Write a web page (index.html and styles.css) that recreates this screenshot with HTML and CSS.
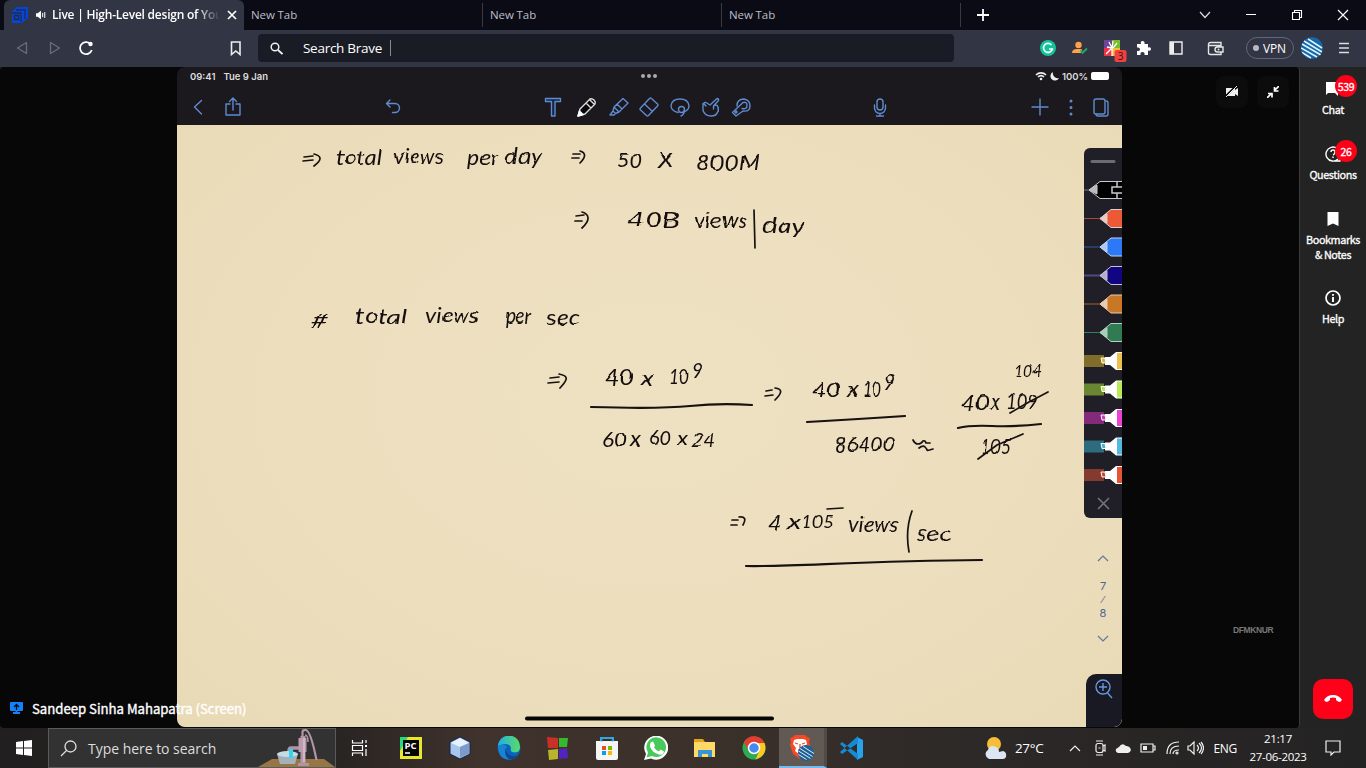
FILE: index.html
```html
<!DOCTYPE html>
<html lang="en">
<head>
<meta charset="utf-8">
<title>Live | High-Level design of YouTube</title>
<link rel="stylesheet" href="styles.css">
</head>
<body>
<header class="tabs">
  <div class="tab active">
    <svg class="fav" width="18" height="16" viewBox="0 0 18 16"><path d="M6 0h11v11l-6 5H1V5z" fill="#0546d9"/><path d="M5 3h9v9M1 6h9v9" fill="none" stroke="#202a55" stroke-width="1.300"/><path d="M3.500 8.500h4v4h-4z" fill="#0546d9" stroke="#23283d" stroke-width="1.500"/></svg>
    <svg class="sound" width="10" height="10" viewBox="0 0 12 12"><path d="M0 4h2l4-3v10L2 8H0z" fill="#fff"/><path d="M8 3.500v5M10.500 2.500v7" stroke="#fff" stroke-width="1.200"/></svg>
    <span class="title">Live | High-Level design of You</span>
    <svg class="close" width="10" height="10" viewBox="0 0 10 10"><path d="M1 1l8 8M9 1L1 9" stroke="#fff" stroke-width="1.700"/></svg>
  </div>
  <div class="tab">New Tab</div><div class="tab">New Tab</div><div class="tab">New Tab</div>
  <svg class="plus" width="12" height="12" viewBox="0 0 12 12"><path d="M6 0v12M0 6h12" stroke="#fff" stroke-width="1.800"/></svg>
  <div class="winbtns">
    <svg width="12" height="12" viewBox="0 0 12 12"><path d="M1 3l5 5.500L11 3" fill="none" stroke="#ddd" stroke-width="1.200"/></svg>
    <svg width="12" height="12" viewBox="0 0 12 12"><path d="M1 5.500h10" stroke="#fff"/></svg>
    <svg width="12" height="12" viewBox="0 0 12 12"><path d="M1.500 3.500h7v7h-7zM3.500 3V1.500h7v7H9" fill="none" stroke="#fff" stroke-width="1.100"/></svg>
    <svg width="12" height="12" viewBox="0 0 12 12"><path d="M1 1l10 10M11 1L1 11" stroke="#fff" stroke-width="1.200"/></svg>
  </div>
</header>
<nav class="bar">
  <svg class="nav-i" width="12" height="14" viewBox="0 0 12 14"><path d="M10.500 1.500v11L1.500 7z" fill="none" stroke="#686d80" stroke-width="1.300" stroke-linejoin="round"/></svg>
  <svg class="nav-i fwd" width="12" height="14" viewBox="0 0 12 14"><path d="M1.500 1.500v11l9-5.500z" fill="none" stroke="#686d80" stroke-width="1.300" stroke-linejoin="round"/></svg>
  <svg class="nav-i rel" width="14" height="14" viewBox="0 0 14 14"><path d="M11 2.500A6 6 0 1 0 12.800 9" fill="none" stroke="#fff" stroke-width="1.700"/><circle cx="11.500" cy="3" r="2.200" fill="#fff"/></svg>
  <svg class="mark" width="12" height="15" viewBox="0 0 12 15"><path d="M1.500 1h8.500v12.500L5.800 10 1.500 13.500z" fill="none" stroke="#eee" stroke-width="1.600"/></svg>
  <div class="address">
    <svg width="13" height="13" viewBox="0 0 13 13"><circle cx="5" cy="5" r="3.800" fill="none" stroke="#eee" stroke-width="1.500"/><path d="M8 8l4.500 4" stroke="#eee" stroke-width="1.800"/></svg>
    <span>Search Brave</span><i></i>
  </div>
  <div class="ext">
    <svg width="16" height="16" viewBox="0 0 16 16"><circle cx="8" cy="8" r="8" fill="#13c39a"/><path d="M11.500 5A4.500 4.500 0 1 0 12.400 9H9" fill="none" stroke="#fff" stroke-width="1.600"/></svg>
    <svg width="16" height="16" viewBox="0 0 16 16"><circle cx="6.500" cy="5" r="3.200" fill="#ffa149"/><path d="M0 13q0-4 5-4h3q2 0 2.500 1L9 12v1z" fill="#ffa149"/><path d="M8.500 10.500l2 2.500L15 8.500" fill="none" stroke="#24a866" stroke-width="1.800"/></svg>
    <svg class="wide" width="23" height="23" viewBox="0 0 23 23"><path fill="#6d4596" d="M0 1h8v8H0z"/><path fill="#78bd2e" d="M8 1h8v8H8z"/><path fill="#ed3146" d="M0 9h8v8H0z"/><path fill="#f7bd36" d="M8 9h8v8H8z"/><path d="M8 9v8M7 10L2 15M8 9L3 8M8 9L5 3M8 9l1-7M9 9l4-5" stroke="#fff" stroke-width="1.300"/><rect x="10.500" y="11" width="12" height="12" rx="2" fill="#f04141"/><text x="16.500" y="20.800" font-size="10" text-anchor="middle" fill="#351010">3</text></svg>
    <svg width="16" height="16" viewBox="0 0 16 16"><path d="M1 4h4Q4 1 6.500 1T8.500 4H12v3.500q3-1 3 1.500t-3 1.500V15H8.500q.5-3-2-3t-2 3H1v-4q3 .5 3-1.800T1 7.500z" fill="#fff"/></svg>
    <svg width="16" height="16" viewBox="0 0 16 16"><path d="M2 2h12v12H2z" fill="none" stroke="#eee" stroke-width="1.400"/><path d="M2 2h4v12H2z" fill="#eee"/></svg>
    <svg class="wallet" width="17" height="15" viewBox="0 0 17 15"><path d="M14 4V1.500H3.500A2 2 0 0 0 1.500 3v8.500q0 2 2 2H14V11M1.500 4.500H14V6M16 6v5h-5.500a2.500 2.500 0 0 1 0-5z" fill="none" stroke="#e5e5e5" stroke-width="1.400"/><circle cx="11.500" cy="8.500" r="1" fill="#e5e5e5"/></svg>
    <div class="vpn"><i></i>VPN</div>
    <svg class="globe" width="22" height="22" viewBox="0 0 22 22"><circle cx="11" cy="11" r="11" fill="#1767a9"/><path d="M3 4l18 11M1 7l19 11M0 11l16 9M7 2l14 9M0 15l10 6" stroke="#dcf5ff" stroke-width="1.500"/></svg>
    <svg class="burger" width="11" height="14" viewBox="0 0 11 14"><path d="M0 2.500h10M0 7h10M0 11.500h10" stroke="#ddd" stroke-width="1.500"/></svg>
  </div>
</nav>
<main class="meeting">
  <section class="stage">
    <div class="tablet">
      <div class="status"><span>09:41</span><span class="date">Tue 9 Jan</span><span class="dots"><i></i><i></i><i></i></span>
        <span class="power"><svg width="12" height="10" viewBox="0 0 12 10"><path d="M1 4a7 7 0 0 1 10 0M3 6a4 4 0 0 1 6 0" fill="none" stroke="#eee" stroke-width="1.600"/><circle cx="6" cy="8" r="1.300" fill="#eee"/></svg><svg width="9" height="9" viewBox="0 0 9 9"><path d="M3 0a5 5 0 0 0 6 6A4.500 4.500 0 1 1 3 0" fill="#eee"/></svg><b>100%</b><em></em></span></div>
      <div class="tools">
        <svg class="t1" viewBox="0 0 20 20"><path d="M13.500 3.500L6.500 10l7 7"/></svg>
        <svg class="t2" viewBox="0 0 20 20"><path d="M7 7H3v11h14V7h-4M10 13V1M6.500 4.500L10 1l3.500 3.500"/></svg>
        <svg class="t3" viewBox="0 0 20 20"><path d="M7 3L3.500 6.500 7 10M4 6.500h8a4 4 0 0 1 0 9H9.500"/></svg>
        <svg class="t4" viewBox="0 0 20 20"><path fill="#152543" d="M2.500 1.500h15v3H12v14.500H8.500v-14.500h-6z"/></svg>
        <svg class="t5" viewBox="0 0 20 20"><path stroke="#ddd" fill="#08080a" d="M1 19l2-7L13 2q2-1 4 1t1 4L8 17zM9 6l5 5M13 3l4 4"/><path d="M1 19l1.500-5 3.500 3.500z" fill="#fff" stroke="#fff"/></svg>
        <svg class="t6" viewBox="0 0 20 20"><path d="M5 10l9-8.500L19 6l-9 9zM8 7l5 5M5 10l-1 4 2.500 2.500L10 15M4 14l-3 4h4l1.500-1.500"/></svg>
        <svg class="t7" viewBox="0 0 20 20"><path d="M1.500 11L10.500 1.500q1-1 2 0l6 5.500q1 1 0 2L9.500 18.500q-1 1-2 0l-6-5.500q-1-1 0-2zM5.500 7l8 7.500"/></svg>
        <svg class="t8" viewBox="0 0 20 20"><path d="M8 15.500Q1 14 1 8.500 2 2 10 2t9 6.500q0 5-5.500 6.500"/><circle cx="11.500" cy="12.500" r="3"/><path d="M14.500 12.500q0 5-3.500 6.500"/></svg>
        <svg class="t9" viewBox="0 0 20 20"><path d="M5 9L3 7q0-2 2-1.500L9 8l7-6.500q2 0 1.500 2L12.500 9q4-2 4 .5 1.500 1 .5 2.500 1 2-.5 3-1 4-6.500 4-6 0-8-5.500V6.500M12.500 9v3"/></svg>
        <svg class="t10" viewBox="0 0 20 20"><path d="M6 9q0-7 7-7 6 1 6 7t-7 5l-7 5-3.500-3.500L12 5.500q4-1 4 3t-5 3"/><circle cx="5" cy="15" r="1"/></svg>
        <svg class="t11" viewBox="0 0 20 20"><rect x="7" y="2" width="6" height="11" rx="3"/><path d="M4.500 8v3a5.500 5.500 0 0 0 11 0V8M10 16.500V19M6.500 19h7"/></svg>
        <svg class="t12" viewBox="0 0 20 20"><path d="M10 2v16M2 10h16"/></svg>
        <svg class="t13" viewBox="0 0 20 20"><path d="M10 4v.01M10 10.500v.01M10 17v.01" stroke-width="3"/></svg>
        <svg class="t14" viewBox="0 0 20 20"><rect x="3" y="2" width="11" height="15" rx="2"/><path d="M15 4q2 0 2 2v11q0 2-2 2H7q-2 0-2-2"/></svg>
      </div>
      <div class="paper">
        <svg class="ink" width="944" height="602" viewBox="178 125 944 602">
          <defs><filter id="wobble" x="-2%" y="-2%" width="104%" height="104%"><feTurbulence type="fractalNoise" baseFrequency=".05" numOctaves="1" seed="4"/><feDisplacementMap in="SourceGraphic" scale="4.500" xChannelSelector="R" yChannelSelector="G"/></filter></defs>
          <g class="writing">
            <text x="336" y="165" textLength="46" lengthAdjust="spacingAndGlyphs">total</text><text x="394" y="164" textLength="50" lengthAdjust="spacingAndGlyphs">views</text><text x="467" y="165" textLength="31" lengthAdjust="spacingAndGlyphs">per</text><text x="505" y="164" textLength="37" lengthAdjust="spacingAndGlyphs">day</text>
            <text x="617" y="168" textLength="25" lengthAdjust="spacingAndGlyphs">50</text><text x="658" y="168" textLength="15" lengthAdjust="spacingAndGlyphs">X</text><text x="696" y="170" textLength="64" lengthAdjust="spacingAndGlyphs">800M</text>
            <text x="627" y="227" textLength="53" lengthAdjust="spacingAndGlyphs">40B</text><text x="694" y="228" textLength="54" lengthAdjust="spacingAndGlyphs">views</text><text x="762" y="233" textLength="43" lengthAdjust="spacingAndGlyphs">day</text>
            <text x="311" y="328" textLength="17" lengthAdjust="spacingAndGlyphs">#</text><text x="355" y="324" textLength="52" lengthAdjust="spacingAndGlyphs">total</text><text x="425" y="323" textLength="54" lengthAdjust="spacingAndGlyphs">views</text><text x="505" y="323" textLength="26" lengthAdjust="spacingAndGlyphs">per</text><text x="547" y="325" textLength="33" lengthAdjust="spacingAndGlyphs">sec</text>
            <text x="605" y="385" textLength="29" lengthAdjust="spacingAndGlyphs">40</text><text x="641" y="385" textLength="12" lengthAdjust="spacingAndGlyphs">x</text><text x="669" y="384" textLength="20" lengthAdjust="spacingAndGlyphs">10</text><text x="692" y="378" textLength="11" lengthAdjust="spacingAndGlyphs">9</text>
            <text x="602" y="447" textLength="25" lengthAdjust="spacingAndGlyphs">60</text><text x="630" y="446" textLength="11" lengthAdjust="spacingAndGlyphs">x</text><text x="649" y="445" textLength="22" lengthAdjust="spacingAndGlyphs">60</text><text x="677" y="446" textLength="11" lengthAdjust="spacingAndGlyphs">x</text><text x="692" y="447" textLength="23" lengthAdjust="spacingAndGlyphs">24</text>
            <text x="812" y="397" textLength="29" lengthAdjust="spacingAndGlyphs">40</text><text x="847" y="397" textLength="11" lengthAdjust="spacingAndGlyphs">x</text><text x="862" y="397" textLength="19" lengthAdjust="spacingAndGlyphs">10</text><text x="884" y="389" textLength="11" lengthAdjust="spacingAndGlyphs">9</text><text x="834" y="452" textLength="61" lengthAdjust="spacingAndGlyphs">86400</text>
            <text class="small" x="1015" y="377" textLength="27" lengthAdjust="spacingAndGlyphs">104</text><text x="962" y="410" textLength="27" lengthAdjust="spacingAndGlyphs">40</text><text x="990" y="409" textLength="10" lengthAdjust="spacingAndGlyphs">x</text><text x="1006" y="409" textLength="32" lengthAdjust="spacingAndGlyphs">109</text><text x="981" y="454" textLength="30" lengthAdjust="spacingAndGlyphs">105</text>
            <text x="768" y="530" textLength="14" lengthAdjust="spacingAndGlyphs">4</text><text x="788" y="530" textLength="13" lengthAdjust="spacingAndGlyphs">x</text><text class="small" x="802" y="528" textLength="32" lengthAdjust="spacingAndGlyphs">105</text><text x="848" y="532" textLength="51" lengthAdjust="spacingAndGlyphs">views</text><text x="917" y="541" textLength="34" lengthAdjust="spacingAndGlyphs">sec</text>
          </g>
          <g class="strokes">
            <path d="M304 157l9-1M303 161l10-1M314 154c8 2 8 6 0 12M573 154h7M572 158h7M580 151c7 2 5 7 0 12M576 216l8-1M575 221h7M582 212c7 2 9 8 0 16M550 378l9-1M548 383l11-1M559 374c10 2 9 5 1 14M766 391l6-1M765 396l8-1M775 388c8 1 7 5 0 12M732 520h6M731 525h6M739 517q9-1 4 8"/>
            <path d="M754 210l1 38M912 511q-7 19-3 41M827 509l16-1M913 440q2 4 5 4t5-3q2-1 3 2h4M919 448q4-3 6-1t2 3 6-1M1010 413l19-11 19-10M978 459l19-14 26-11"/>
            <path class="rule" d="M591 407Q660 409 690 406T752 405M807 422Q860 419 905 416M958 428Q970 425 992 426T1041 424M746 566C790 567 860 561 982 560"/>
          </g>
          <rect class="home" x="525" y="716.500" width="249" height="4" rx="2"/>
        </svg>
        <aside class="pens">
          <svg width="38" height="370" viewBox="1084 148 38 370">
            <path d="M1092 161.500h22" stroke="#6c6a72" stroke-width="3" stroke-linecap="round"/>
            <g stroke="#c8c8ce"><path d="M1084 190h6" stroke="#777"/><path d="M1089 190l11-8.500h24v17h-24z" fill="#000"/><path d="M1089 190l8-5v9z" fill="#bbb"/><path d="M1117 182v5h-5v6h5v5M1117 187h6M1117 193h6" fill="none" stroke-width="1.500"/></g>
            <defs><path id="body" d="M1100 218.500l11-9h13v18h-13z"/><path id="tip" d="M1100 218.500l7-5v10z"/><path id="marker" d="M1105 357h5l6-5h8v18h-8l-6-5h-5z"/></defs>
            <g stroke="#d5d0d9"><path d="M1084 218.500h16" stroke="#a54a35"/><use href="#body" fill="#ed5835"/><use href="#tip" fill="#f5c6ba"/></g>
            <g stroke="#c5d2f0" transform="translate(0 28.500)"><path d="M1084 218.500h16" stroke="#29609f"/><use href="#body" fill="#2b79f6"/><use href="#tip" fill="#a8c9fa"/></g>
            <g stroke="#c4bfda" transform="translate(0 57)"><path d="M1084 218.500h16" stroke="#514982" stroke-width="2"/><use href="#body" fill="#110581"/><use href="#tip" fill="#b6abd1"/></g>
            <g stroke="#e6cab4" transform="translate(0 85.500)"><path d="M1084 218.500h16" stroke="#a2672d"/><use href="#body" fill="#c87727"/><use href="#tip" fill="#ebcbb2"/></g>
            <g stroke="#b5cfc1" transform="translate(0 114)"><path d="M1084 218.500h16" stroke="#318066"/><use href="#body" fill="#317b52"/><use href="#tip" fill="#a6ccba"/></g>
            <g><path d="M1084 355h20v12h-20z" fill="#806d2b"/><use href="#marker" fill="#fff"/><path d="M1101 358h4l1 5h-4z" fill="#e7b832" stroke="#fff"/><path d="M1117 353h5v16h-5z" fill="#eac14d"/></g>
            <g transform="translate(0 28.500)"><path d="M1084 355h20v12h-20z" fill="#698632"/><use href="#marker" fill="#fff"/><path d="M1101 358h4l1 5h-4z" fill="#bce649" stroke="#fff"/><path d="M1117 353h5v16h-5z" fill="#b9e955"/></g>
            <g transform="translate(0 57)"><path d="M1084 355h20v12h-20z" fill="#832a7b"/><use href="#marker" fill="#fff"/><path d="M1101 358h4l1 5h-4z" fill="#cf38b9" stroke="#fff"/><path d="M1117 353h5v16h-5z" fill="#ec42d4"/></g>
            <g transform="translate(0 85.500)"><path d="M1084 355h20v12h-20z" fill="#2d6b7f"/><use href="#marker" fill="#fff"/><path d="M1101 358h4l1 5h-4z" fill="#4fafd0" stroke="#fff"/><path d="M1117 353h5v16h-5z" fill="#52b9df"/></g>
            <g transform="translate(0 114)"><path d="M1084 355h20v12h-20z" fill="#833b30"/><use href="#marker" fill="#fff"/><path d="M1101 358h4l1 5h-4z" fill="#d64030" stroke="#fff"/><path d="M1117 353h5v16h-5z" fill="#e75335"/></g>
            <path d="M1098 498l11 11M1109 498l-11 11" stroke="#77767d" stroke-width="1.500"/>
          </svg>
        </aside>
        <div class="pages"><svg width="12" height="8" viewBox="0 0 12 8"><path d="M1 6l5-5 5 5"/></svg><span>7</span><small>⁄</small><span>8</span><svg width="12" height="8" viewBox="0 0 12 8"><path d="M1 1l5 5 5-5"/></svg></div>
        <div class="zoombox"><svg width="18" height="20" viewBox="0 0 18 20"><path d="M12.500 14L17 19M8 4v8M4 8h8" /><circle cx="8" cy="8" r="7"/></svg></div>
      </div>
    </div>
    <div class="overlaybtns">
      <span><svg width="14" height="12" viewBox="0 0 14 12"><path d="M1 2h9v2l3-2v8l-3-2v2H1z" fill="#eee"/><path d="M0 11L11 0" stroke="#080808" stroke-width="2"/><path d="M1 11L12 0" stroke="#eee"/></svg></span>
      <span><svg width="12" height="12" viewBox="0 0 12 12"><path d="M12 0L8 4M7.500 1v4h4M0 12l4-4M1 7.500h4v4" fill="none" stroke="#fff" stroke-width="1.700"/></svg></span>
    </div>
    <div class="watermark">DFMKNUR</div>
    <div class="speaker"><svg width="13" height="12" viewBox="0 0 13 12"><rect width="13" height="9" rx="1" fill="#1482fa"/><path d="M3 11h7M6.500 9v2" stroke="#1482fa" stroke-width="2"/><path d="M6.500 8V2.500M4 5l2.500-2.500L9 5" fill="none" stroke="#0a1018" stroke-width="1.300"/></svg><span>Sandeep Sinha Mahapatra (Screen)</span></div>
  </section>
  <aside class="side">
    <div class="item chat"><svg width="16" height="16" viewBox="0 0 16 16"><path d="M1 1h13v11h-1v3l-3-3H3l-2 2z" fill="#fff"/></svg><span>Chat</span><b>539</b></div>
    <div class="item ques"><svg width="16" height="16" viewBox="0 0 16 16"><path d="M13 13a7 7 0 1 1 2-5v7h-4" fill="none" stroke="#fff" stroke-width="1.400"/><path d="M6 6q0-2 2-2t2 2-2 3M8 10.500V12" fill="none" stroke="#fff" stroke-width="1.400"/></svg><span>Questions</span><b>26</b></div>
    <div class="item book"><svg width="16" height="16" viewBox="0 0 16 16"><path d="M2.500 1h11v14L8 12.500 2.500 15z" fill="#fff"/></svg><span>Bookmarks<br>&amp; Notes</span></div>
    <div class="item help"><svg width="16" height="16" viewBox="0 0 16 16"><circle cx="8" cy="8" r="7" fill="none" stroke="#fff" stroke-width="1.700"/><path d="M8 7v5M8 4v1.700" stroke="#fff" stroke-width="1.900"/></svg><span>Help</span></div>
    <div class="hang"><svg width="18" height="8" viewBox="0 0 18 8"><path d="M0 5Q3 0 9 0t9 5l-2 2q-2 0-4-2V3Q9 2 6 3v2Q4 7 2 7z" fill="#fff"/></svg></div>
  </aside>
</main>
<footer class="taskbar">
  <div class="start"><svg width="16" height="16" viewBox="0 0 16 16"><path d="M0 2l7-1v6.500H0zM8 1l8-1v7.500H8zM0 8.500h7V15l-7-1zM8 8.500h8V16l-8-1z" fill="#fff"/></svg></div>
  <div class="search"><svg width="17" height="17" viewBox="0 0 17 17"><circle cx="10.500" cy="6.500" r="5.500"/><path d="M6.500 10.500L1 16"/></svg><span>Type here to search</span>
    <svg class="pump" width="77" height="38" viewBox="0 0 77 38"><path d="M0 38l14-8h52l11 8z" fill="#977544"/><path d="M19 25h21l-3 10H22z" fill="#a4b1b8"/><ellipse cx="29.500" cy="25" rx="10.500" ry="3" fill="#c4dce2"/><path d="M43 19H33q-2 0-2 3" fill="none" stroke="#b093a4" stroke-width="3.500"/><path d="M33 20v9" stroke="#35d4f0" stroke-width="4"/><path d="M45 7v28" stroke="#b497a8" stroke-width="5"/><path d="M40.500 9h8v14h-8z" fill="#b99dad"/><path d="M46 9v24" stroke="#d9c0ce" stroke-width="1.500"/><path d="M44.500 8V3q0-2 3-2 5 0 11 30" fill="none" stroke="#b395a8" stroke-width="2.200"/><path d="M47 6q3 0 3 7" fill="none" stroke="#b395a8" stroke-width="1.500"/><path d="M40 35.500h11" stroke="#b092a3" stroke-width="3"/></svg>
  </div>
  <div class="apps">
    <svg class="taskview" width="24" height="24" viewBox="0 0 24 24"><path d="M4.500 4v3h10V4M4.500 20v-3h10v3M4.500 9.500h10v5h-10zM18 4v3M18 13v7" fill="none" stroke="#fff" stroke-width="1.200"/><path d="M17 9h2v2h-2z" fill="#fff"/></svg>
    <svg width="24" height="24" viewBox="0 0 24 24"><path d="M1 1h22v22H1z" fill="#e6e829"/><path d="M1 1h8L1 15z" fill="#25db7e"/><path d="M4 4h16v16H4z" fill="#050505"/><text x="5.500" y="12.500" font-size="8.500" font-weight="bold" fill="#fff" textLength="12" lengthAdjust="spacingAndGlyphs">PC</text><path d="M6 17h5" stroke="#fff" stroke-width="1.500"/></svg>
    <svg width="24" height="24" viewBox="0 0 24 24"><path d="M12 1l10 5v12l-10 5-10-5V6z" fill="#a9c7ed" stroke="#132350"/><path d="M3 7l9 4 9-4-9-5z" fill="#e5f2ff"/><path d="M12 11l9-4v10.500L12 22z" fill="#7d9ac8"/></svg>
    <svg width="24" height="24" viewBox="0 0 24 24"><defs><linearGradient id="eg"><stop stop-color="#22aee5"/><stop offset="1" stop-color="#5bdc66"/></linearGradient></defs><circle cx="12" cy="12" r="11.500" fill="#0b62b7"/><path d="M1 10A11 11 0 0 1 23 11q0 7-8 5-2-1-1-4Q12 5 1 10" fill="url(#eg)"/><path d="M1 10q7-3 9 1-5 4 1 9 4 3 10 0-7 6-15 2-5-4-5-12" fill="#1684d2"/><path d="M10 11q-3 6 5 9 4 1 6-1-2 5-9 4-6-4-2-12" fill="#0c4694"/></svg>
    <svg width="24" height="24" viewBox="0 0 24 24"><path d="M1 1l11 1v10H2z" fill="#c93028"/><path d="M13 2h9l-1 9h-8z" fill="#36b82c"/><path d="M2 14l10-1v10l-9 1z" fill="#b9b42c"/><path d="M13 13l8-1 1 10-9 1z" fill="#5423bf"/></svg>
    <svg width="24" height="24" viewBox="0 0 24 24"><path d="M6 7V2h12v5" fill="none" stroke="#2ea8e5" stroke-width="2"/><path d="M1 5h22v17q0 2-2 2H3q-2 0-2-2z" fill="#f5f5f5"/><path d="M6.500 5.500V2h11v3.500" fill="none" stroke="#2ea8e5" stroke-width="1.500"/><path d="M7 10h4v4H7z" fill="#e94b25"/><path d="M13 10h4v4h-4z" fill="#7eb900"/><path d="M7 15h4v4H7z" fill="#089fe5"/><path d="M13 15h4v4h-4z" fill="#fab800"/></svg>
    <svg width="24" height="24" viewBox="0 0 24 24"><path d="M0 24l2-6A12 12 0 1 1 7 22.500z" fill="#fff"/><path d="M2.500 21.500l1.500-5A9.800 9.800 0 1 1 8 20z" fill="#48c95c"/><path d="M7 6l2-.5 2 4-1 2q2 3 5 4l1.500-2 3.500 2q-1 4-5 3-7-2-9-8-.5-2 1-4.500" fill="#fff"/></svg>
    <svg width="24" height="24" viewBox="0 0 24 24"><path d="M1 3h9l2 3H1z" fill="#e4a51a"/><path d="M1 6h21v15H1z" fill="#ffd968"/><path d="M5 21v-7h14v7h-4v-3H9v3z" fill="#3895d3"/></svg>
    <svg width="24" height="24" viewBox="0 0 24 24"><circle cx="12" cy="12" r="11.500" fill="#2cab50"/><path d="M2 6A11.500 11.500 0 0 1 22.500 7H12l-5 8z" fill="#e53c31"/><path d="M12 7h10.500q4 12-9 16.500l4-9z" fill="#fdc91f"/><circle cx="12" cy="12" r="5.500" fill="#4789ef" stroke="#fff" stroke-width="1.500"/></svg>
    <div class="brave"><svg width="26" height="27" viewBox="0 0 26 27"><path d="M6 1h10l2 2 3 1-1 4 1 3-3 9-7 5-7-5-3-9 1-3-1-4 3-1z" fill="#f84925"/><path d="M5 6l3-1h6l3 1 1 4-3 4 1 3-5 4-5-4 1-3-3-4z" fill="#fff"/><path d="M6 9l3 1M16 9l-3 1M11 10v4M9 16h4" stroke="#f84925" stroke-width="1.300" fill="none"/><circle cx="17" cy="19" r="8" fill="#206095"/><path d="M11 14.500l12.500 8M9.500 17l12 7.500M14 12.500l11 7M9.500 20.500l8 5" stroke="#d9ecf2"/></svg></div>
    <svg class="code" width="24" height="24" viewBox="0 0 24 24"><path d="M17 1l6 3v17l-6 3z" fill="#25a4ed"/><path d="M0 8l2-2 16 12v6zM0 16l2 2L18 7V0z" fill="#168bd5"/></svg>
  </div>
  <div class="tray">
    <svg class="weather" width="25" height="24" viewBox="0 0 25 24"><circle cx="12" cy="8" r="7" fill="#f7bd36"/><path d="M7 23a5 5 0 0 1-1-9q2-6 8-3 3 1 3 5l4-1q4 1 3 6-1 2-3 2z" fill="#dce6f2"/></svg><span class="temp">27°C</span>
    <svg class="up" width="12" height="8" viewBox="0 0 12 8"><path d="M1 7l5-5 5 5"/></svg>
    <svg class="cam" width="14" height="16" viewBox="0 0 14 16"><rect x="3" y="3.500" width="7" height="9" rx="2"/><path d="M10 6l2-1v6l-2-1M3 1h7M3 15h7M5.500 8h2"/></svg>
    <svg class="cloud" width="16" height="10" viewBox="0 0 16 10"><path d="M3 10q-3-1-2-4l3-2q3-5 7-1 4 0 5 4-1 3-3 3z"/></svg>
    <svg class="bat" width="16" height="12" viewBox="0 0 16 12"><path d="M1 2h12v8H1zM13 4h2v4h-2"/><path d="M3 4h4v4H3z" fill="#eee" stroke="none"/></svg>
    <svg class="net" width="14" height="14" viewBox="0 0 14 14"><path d="M1 13Q1 1 13 1M4 13q0-8 9-8M7 13q0-4 6-4"/><circle cx="11" cy="12" r="1"/></svg>
    <svg class="vol" width="17" height="14" viewBox="0 0 17 14"><path d="M1 5h2l4-4v12L3 9H1zM10 4q3 3 0 6M12 2q5 5 0 10M14 1q5 6 0 12"/></svg>
    <span class="lang">ENG</span><div class="clock">21:17<br>27-06-2023</div>
    <svg class="note" width="16" height="16" viewBox="0 0 16 16"><path d="M1 1h14v11H9l-3 3v-3H1z"/></svg>
  </div>
</footer>
</body>
</html>
```
FILE: styles.css
```css
* { box-sizing: border-box; }
body { margin: 0; width: 1366px; height: 768px; overflow: hidden; display: flex; flex-direction: column; background: #000; font-family: "Open Sans", sans-serif; color: #fff; }
svg { flex: none; display: block; }
.tabs { height: 30px; flex: none; background: #0a0b14; display: flex; align-items: center; padding-left: 4px; }
.tab { width: 239px; height: 24px; flex: none; font-size: 11.500px; line-height: 24px; color: #bdbec8; padding-left: 7px; letter-spacing: -.1px; border-right: 1px solid #383a45; }
.tab.active { width: 240px; height: 30px; background: #323544; border: 0; border-radius: 6px 6px 0 0; display: flex; align-items: center; font-weight: 600; color: #fff; }
.sound { margin-left: 7px; }
.title { width: 168px; margin-left: 6px; overflow: hidden; white-space: nowrap; font-size: 12px; letter-spacing: -.23px; -webkit-mask-image: linear-gradient(90deg, #000 86%, transparent); mask-image: linear-gradient(90deg, #000 86%, transparent); }
.close { margin-left: 7px; }
.plus { margin-left: 16px; }
.winbtns { margin-left: auto; margin-right: 17px; display: flex; gap: 34px; }
.bar { height: 37px; flex: none; background: #323544; display: flex; align-items: center; padding: 0 0 1px 16px; }
.fwd { margin-left: 21px; }
.rel { margin-left: 18px; }
.mark { margin-left: 137px; }
.address { width: 696px; height: 28px; margin-left: 16px; border-radius: 4px; background: #191c25; display: flex; align-items: center; padding-left: 12px; font-size: 13.500px; }
.address span { margin-left: 20px; letter-spacing: -.28px; }
.address i { width: 1px; height: 16px; background: #888; margin-left: 8px; }
.ext { display: flex; align-items: center; margin-left: 86px; gap: 16px; }
.wide { margin: 5px -7px 0 0; }
.wallet { margin-left: 7px; }
.vpn { width: 48px; height: 22px; margin-left: 6px; border: 1px solid #62667a; border-radius: 11px; font-size: 12px; letter-spacing: -.2px; display: flex; align-items: center; gap: 4px; padding-left: 6px; }
.vpn i { width: 6px; height: 6px; border-radius: 50%; background: #b7b9c9; }
.globe { margin-left: -9px; border-radius: 50%; }
.meeting { height: 661px; flex: none; display: flex; background: #232323; }
.stage { width: 1300px; background: #070707; position: relative; padding-left: 177px; border-right: 1px solid #3a3a3a; border-radius: 4px; }
.tablet { width: 945px; height: 660px; background: #1b181e; border-radius: 8px; overflow: hidden; }
.status { height: 20px; display: flex; align-items: center; padding: 0 13px 2px; font-family: Inter, sans-serif; font-size: 9.500px; font-weight: 600; color: #ddd; }
.date { margin-left: 8px; }
.dots { display: flex; gap: 2px; margin-left: 373px; }
.dots i { width: 4px; height: 4px; border-radius: 50%; background: #aaa; }
.power { margin-left: auto; display: flex; align-items: center; gap: 3px; }
.power b { font-size: 9.500px; font-weight: 600; }
.power em { width: 18px; height: 8px; border-radius: 2px; background: #fff; }
.tools { height: 38px; display: flex; align-items: center; padding: 2px 0 0 11px; }
.tools svg { width: 20px; height: 20px; fill: none; stroke: #5f8bcf; stroke-width: 1.400; stroke-linejoin: round; stroke-linecap: round; }
.tools .t2 { margin-left: 15px; } .tools .t3, .tools .t4, .tools .t12 { margin-left: 140px; }
.tools .t5 { margin-left: 14px; } .tools .t6 { margin-left: 12px; } .tools .t7, .tools .t10, .tools .t14 { margin-left: 10px; }
.tools .t8, .tools .t9, .tools .t13 { margin-left: 11px; } .tools .t11 { margin-left: 119px; }
.paper { height: 602px; position: relative; background: radial-gradient(ellipse at 50% 45%, #eee1c2, #ecdebd 60%, #e9dab6); }
.ink { margin-left: 1px; }
.writing { font: italic 21px Lato, sans-serif; fill: #17110f; filter: url(#wobble); }
.writing .small { font-size: 18px; }
.strokes { fill: none; stroke: #17110f; stroke-width: 1.700; stroke-linecap: round; stroke-linejoin: round; }
.rule { stroke-width: 2.200; }
.home { fill: #050505; }
.pens { position: absolute; left: 907px; top: 23px; width: 38px; height: 370px; background: #201e27; border-radius: 6px 0 0 6px; overflow: hidden; }
.pages { position: absolute; right: 10px; top: 430px; width: 18px; display: flex; flex-direction: column; align-items: center; font: 11px/14px Inter, sans-serif; color: #4d6792; }
.pages svg { fill: none; stroke: #637798; stroke-width: 1.200; }
.pages span:first-of-type { margin-top: 16px; }
.pages small { height: 13px; }
.pages svg:last-child { margin-top: 15px; }
.zoombox { position: absolute; right: 0; bottom: 0; width: 36px; height: 53px; background: #181923; border-radius: 10px 0 8px 0; padding: 5px 9px; }
.zoombox svg { fill: none; stroke: #6796df; stroke-width: 1.400; }
.overlaybtns { position: absolute; left: 1216px; top: 9px; display: flex; gap: 9px; }
.overlaybtns span { width: 32px; height: 32px; border-radius: 8px; background: #0c0c0c; display: flex; align-items: center; justify-content: center; }
.watermark { position: absolute; left: 1233px; top: 557px; font: bold 8.500px/12px "Liberation Sans", sans-serif; letter-spacing: -.4px; color: #777; }
.speaker { position: absolute; left: 10px; top: 631px; height: 20px; display: flex; align-items: center; font: 400 13.200px "Noto Sans CJK SC", sans-serif; -webkit-text-stroke: .35px #fff; }
.speaker span { margin-left: 9px; white-space: nowrap; letter-spacing: -.02px; }
.side { width: 66px; display: flex; flex-direction: column; align-items: center; position: relative; }
.item { position: relative; display: flex; flex-direction: column; align-items: center; font: 400 10.800px/15px "Noto Sans CJK SC", sans-serif; letter-spacing: -.38px; text-align: center; -webkit-text-stroke: .3px #fff; }
.item span { margin-top: 5px; white-space: nowrap; }
.item b { position: absolute; left: 50%; top: -6px; margin-left: 2px; width: 22px; height: 22px; border-radius: 50%; background: #ff0019; display: flex; align-items: center; justify-content: center; font-size: 10.500px; font-weight: 400; }
.chat { margin-top: 14px; } .ques { margin-top: 29px; } .book { margin-top: 29px; } .help { margin-top: 28px; }
.hang { width: 40px; height: 40px; border-radius: 10px; background: #ff0019; display: flex; align-items: center; justify-content: center; position: absolute; top: 612px; left: 13px; }
.taskbar { height: 40px; flex: none; display: flex; background: linear-gradient(90deg, #211f1f, #292523 25%, #40322c 35%, #3a302a 55%, #302b29 65%, #292625 80%, #242324); }
.start { width: 48px; display: flex; align-items: center; justify-content: center; }
.search { width: 288px; border: 1px solid #5c5b5b; background: #323232; display: flex; align-items: center; padding-left: 11px; color: #ddd; font-size: 14px; letter-spacing: -.03px; }
.search > svg:first-child { fill: none; stroke: #ddd; stroke-width: 1.300; }
.search span { margin-left: 11px; white-space: nowrap; }
.pump { margin-left: auto; }
.apps { display: flex; align-items: center; margin-left: 12px; }
.apps > svg { margin-right: 25px; }
.apps > .taskview { margin-right: 27px; }
.brave { width: 48px; height: 40px; margin-left: -12px; display: flex; align-items: center; justify-content: center; background: #605954; border-bottom: 2px solid #76b9ed; border-right: 3px solid #514b47; }
.apps > .code { margin: 0 0 0 13px; }
.tray { flex: 1; display: flex; align-items: center; justify-content: flex-end; padding-right: 25px; font-size: 12px; }
.tray svg { fill: none; stroke: #eee; stroke-width: 1.200; }
.tray .weather { stroke: none; }
.tray .cloud { fill: #eee; stroke: none; }
.temp { margin-left: 8px; font-size: 13.500px; letter-spacing: -.3px; }
.up { margin-left: 26px; } .cam { margin-left: 12px; } .cloud { margin-left: 8px; } .bat { margin-left: 9px; } .net { margin-left: 10px; } .vol { margin-left: 7px; }
.lang { margin-left: 9px; letter-spacing: -.3px; }
.clock { width: 62px; margin-left: 10px; line-height: 18px; text-align: center; font-size: 11.500px; letter-spacing: -.3px; white-space: nowrap; }
.note { margin-left: 16px; }
```
